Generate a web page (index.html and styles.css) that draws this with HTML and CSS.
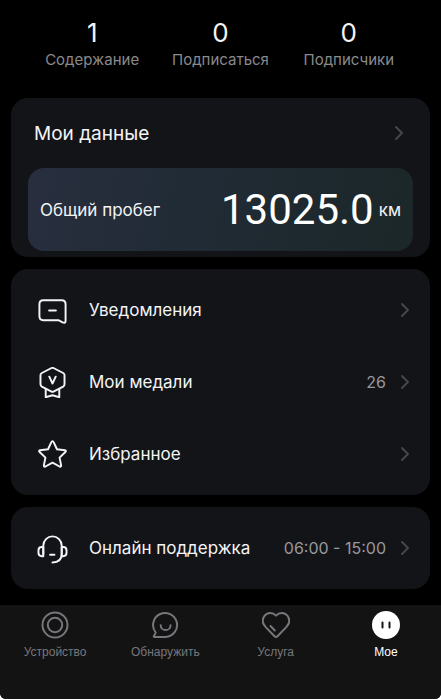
FILE: index.html
```html
<!DOCTYPE html>
<html lang="ru">
<head>
<meta charset="utf-8">
<meta name="viewport" content="width=device-width, initial-scale=1">
<title>Мое</title>
<link rel="stylesheet" href="styles.css">
</head>
<body>
<svg class="defs" aria-hidden="true">
  <symbol id="chevron" viewBox="0 0 10 16"><path d="M2 2l6 6-6 6"/></symbol>
</svg>
<div class="app">
  <main class="content">
    <div class="stats">
      <a class="stat" href="#"><span class="stat-value">1</span><span class="stat-label">Содержание</span></a>
      <a class="stat" href="#"><span class="stat-value">0</span><span class="stat-label">Подписаться</span></a>
      <a class="stat" href="#"><span class="stat-value">0</span><span class="stat-label">Подписчики</span></a>
    </div>

    <section class="card data-card">
      <a class="data-head" href="#">
        <span>Мои данные</span>
        <svg class="chevron"><use href="#chevron"/></svg>
      </a>
      <div class="mileage">
        <span class="mileage-label">Общий пробег</span>
        <span class="mileage-value">13025.0</span>
        <span class="mileage-unit">км</span>
      </div>
    </section>

    <section class="card list">
      <a class="row" href="#">
        <svg class="row-icon" viewBox="0 0 32 32"><path d="M6.500 5.500h19q4 0 4 4v17q0 3-3 1.800l-4.500-2.300h-15.500q-4 0-4-4v-12.500q0-4 4-4z"/><path d="M12.500 16h7"/></svg>
        <span class="row-title">Уведомления</span>
        <svg class="chevron"><use href="#chevron"/></svg>
      </a>
      <a class="row" href="#">
        <svg class="row-icon" viewBox="0 0 32 32"><path d="M14.500 1.300q1.500-.8 3 0l9.500 4.900q1.400.8 1.400 2.400v9.200q0 1.600-1.400 2.400l-9.500 4.900q-1.500.8-3 0l-9.500-4.900q-1.400-.8-1.400-2.400V8.600q0-1.600 1.400-2.400z"/><path d="M12.700 10l3.300 7 3.300-7M9 23v8.200l7-2 7 2v-8.200"/></svg>
        <span class="row-title">Мои медали</span>
        <span class="row-value">26</span>
        <svg class="chevron"><use href="#chevron"/></svg>
      </a>
      <a class="row" href="#">
        <svg class="row-icon" viewBox="0 0 32 32"><path d="M16 2.200q.8 0 1.200 1l3.400 7.400 8.200 1q1.800.4.500 1.800l-6 5.800 1.600 8q.1 1.900-1.600 1.200l-7.300-4-7.300 4q-1.700.7-1.600-1.200l1.600-8-6-5.800q-1.300-1.400.5-1.800l8.200-1 3.400-7.400q.4-1 1.200-1z"/></svg>
        <span class="row-title">Избранное</span>
        <svg class="chevron"><use href="#chevron"/></svg>
      </a>
    </section>

    <section class="card list">
      <a class="row" href="#">
        <svg class="row-icon" viewBox="0 0 32 32"><path d="M6.500 22v-9a9.500 9.500 0 0 1 19 0v9q0 8-9.500 8.500M13.500 22.500h4.500"/><path d="M6.500 14.500h-1.500q-3.500 0-3.500 3.500v2.500q0 3.500 3.500 3.500h1.500zM25.500 14.500h1.500q3.500 0 3.500 3.500v2.500q0 3.500-3.500 3.500h-1.500z"/></svg>
        <span class="row-title">Онлайн поддержка</span>
        <span class="row-value">06:00 - 15:00</span>
        <svg class="chevron"><use href="#chevron"/></svg>
      </a>
    </section>
  </main>

  <nav class="tabs">
    <a class="tab" href="#">
      <svg class="tab-icon" viewBox="0 0 28 28"><circle cx="14" cy="14" r="12.500"/><circle cx="14" cy="14" r="7.200"/></svg>
      <span>Устройство</span>
    </a>
    <a class="tab" href="#">
      <svg class="tab-icon" viewBox="0 0 28 28"><path d="M4.700 21.500A12 12 0 1 1 14.500 26H3.200q-.8-.2-.2-1.200 1.200-1.600 1.700-3.300z"/><path d="M9.700 14.200a4.900 4.900 0 0 0 9.800 0"/></svg>
      <span>Обнаружить</span>
    </a>
    <a class="tab" href="#">
      <svg class="tab-icon" viewBox="0 0 28 28"><path d="M14 4.600C17.500.8 23 1.200 25.500 4.800c2.700 3.800 1.900 8-1 11.100l-9 9.300q-1.500 1.500-3 0l-9-9.300c-2.900-3.100-3.700-7.300-1-11.100C5 1.200 10.500.8 14 4.600z"/><path d="M8.500 15l4.300 4.500"/></svg>
      <span>Услуга</span>
    </a>
    <a class="tab active" href="#" aria-current="page">
      <svg class="tab-icon" viewBox="0 0 28 28"><circle class="face" cx="14" cy="14" r="14"/><path class="eyes" d="M10.500 11.500v5M17.500 11.500v5"/></svg>
      <span>Мое</span>
    </a>
  </nav>
</div>
</body>
</html>
```
FILE: styles.css
```css
* {
  box-sizing: border-box;
}

html {
  background: #fff;
}

body {
  margin: 0;
  font-family: Inter, "Noto Sans", sans-serif;
  color: #f4f4f6;
}

a {
  color: inherit;
  text-decoration: none;
}

svg {
  fill: none;
  stroke: currentColor;
  stroke-width: 2;
  stroke-linecap: round;
  stroke-linejoin: round;
  flex: none;
}

.defs {
  display: none;
}

.app {
  display: flex;
  flex-direction: column;
  min-height: 100vh;
  background: #000;
  border-radius: 0 0 6px 6px;
  overflow: hidden;
}

.content {
  flex: 1;
  display: flex;
  flex-direction: column;
  gap: 12px;
  padding: 17px 11px 16px;
}

.stats {
  display: grid;
  grid-template-columns: repeat(3, 1fr);
  padding: 0 17px 15px;
}

.stat {
  display: flex;
  flex-direction: column;
  align-items: center;
}

.stat-value {
  font-size: 26px;
  line-height: 32px;
}

.stat-label {
  font-size: 15px;
  line-height: 22px;
  color: #8a8a8c;
}

.card {
  border-radius: 17px;
  background: #131418;
}

.data-card {
  padding: 0 17px 6px;
}

.data-head {
  display: flex;
  align-items: center;
  justify-content: space-between;
  height: 70px;
  padding: 0 9px 0 6px;
  font-size: 19px;
}

.chevron {
  width: 10px;
  height: 16px;
  color: #46474b;
}

.mileage {
  display: flex;
  align-items: center;
  height: 83px;
  padding: 0 12px;
  border-radius: 16px;
  background: linear-gradient(100deg, #282e3e 0%, #202b35 45%, #1b2728 100%);
}

.mileage-label {
  flex: 1;
  font-size: 17px;
}

.mileage-value {
  font-family: Roboto, sans-serif;
  font-size: 42px;
  color: #fff;
}

.mileage-unit {
  margin-left: 5px;
  font-size: 17px;
}

.list {
  padding: 5px 20px 5px 26px;
}

.row {
  display: flex;
  align-items: center;
  height: 72px;
}

.row-icon {
  width: 31px;
  height: 31px;
}

.row-title {
  flex: 1;
  margin-left: 21px;
  font-size: 17px;
}

.row-value {
  margin-right: 14px;
  font-size: 16px;
  color: #98999d;
}

.tabs {
  display: grid;
  grid-template-columns: repeat(4, 1fr);
  height: 94px;
  background: #131314;
}

.tab {
  display: flex;
  flex-direction: column;
  align-items: center;
  gap: 6px;
  padding-top: 6px;
  font-family: "Liberation Sans", sans-serif;
  font-size: 12px;
  line-height: 14px;
  color: #77777b;
}

.tab-icon {
  width: 28px;
  height: 28px;
}

.active {
  color: #fff;
}

.face {
  fill: #fff;
  stroke: none;
}

.eyes {
  stroke: #131314;
}
```
